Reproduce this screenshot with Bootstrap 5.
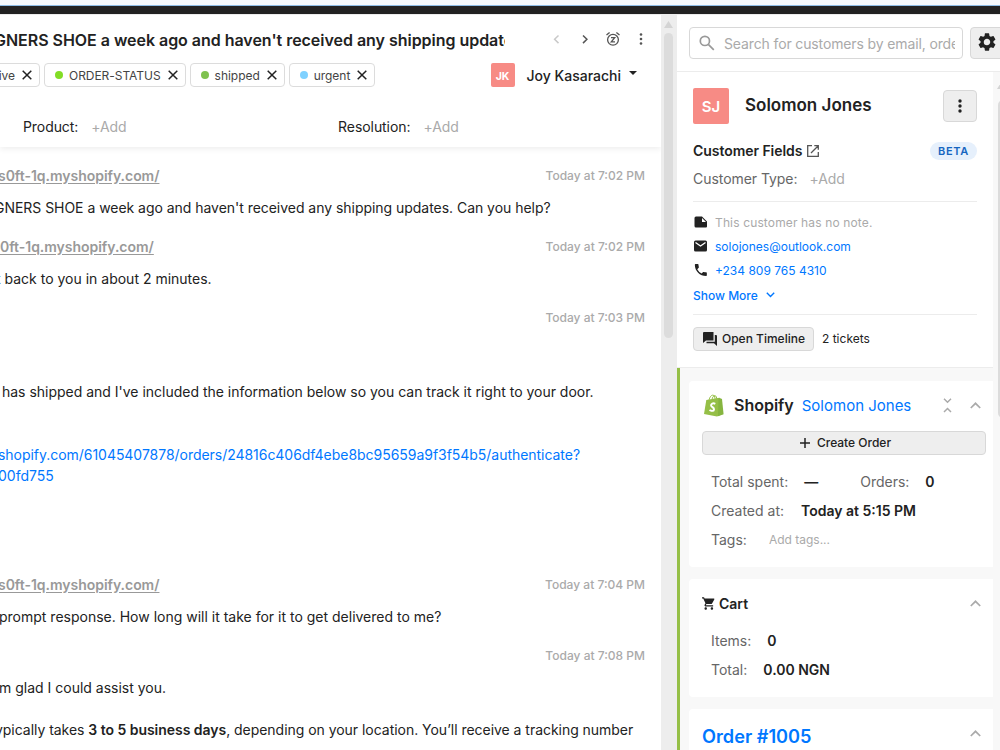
<!DOCTYPE html>
<html lang="en">
<head>
<meta charset="utf-8">
<title>Ticket</title>
<link href="https://cdn.jsdelivr.net/npm/bootstrap@5.3.0/dist/css/bootstrap.min.css" rel="stylesheet">
<style>
body{width:1000px;height:750px;overflow:hidden;font-family:Inter,"Liberation Sans",sans-serif;font-size:14px;line-height:21px;color:#222;background:#fff}
svg{display:block;flex:none}
a,a:hover{color:#0077ff;text-decoration:none}
.topbar{height:15px;background:linear-gradient(#f5f9fd 0 5px,#8dbce6 5px 6px,#222 6px 14px,#ececec 14px)}
.shell{height:735px}
.ticket{width:661px}
.ticket-head{height:132px;box-shadow:0 2px 6px rgba(0,0,0,.07)}
.subject{width:505px;height:24px;margin-top:13px;font-size:16px;line-height:24px;font-weight:600;letter-spacing:-.03px}
.subject span{margin-left:-6px}
.nav-icons{margin:16px 12px 0 0;gap:12px}
.tags{height:24px;margin-top:11px}
.tagbox{height:24px;border:1px solid #dcdcdc;border-radius:4px;font-size:12px;letter-spacing:-.04px;margin-right:4px;padding:0 7px 0 10px;color:#444}
.tagbox svg{margin-left:7px}
.tagbox.cut{margin-left:-20px;width:60px;padding-left:0}
.dot{width:8px;height:8px;border-radius:50%;margin-right:6px}
.ava{background:#f78b85;color:#fff;font-weight:600;border-radius:2px}
.ava.sm{width:24px;height:24px;font-size:10.5px;font-weight:700;padding-top:2px}
.ava.lg{width:36px;height:36px;font-size:15px}
.assignee{margin-left:auto;margin-right:24px}
.assignee .who{font-weight:500;margin:1px 8px 0 12px}
.meta{margin-top:29px;letter-spacing:-.07px}
.mu{color:#aaa}
.m1{margin-left:23px}.m2{margin-left:13px}.m3{margin-left:211.5px}
.thread{padding-top:17.5px}
.msg{margin-bottom:18px;white-space:nowrap}
.msg.long{margin-bottom:25px}
.msg-head{height:21px;margin-bottom:11px;padding-right:16px;font-weight:600}
.msg-head a{color:#999;text-decoration:underline;text-underline-offset:2px;letter-spacing:-.03px}
.time{font-size:12px;font-weight:500;margin-left:auto;color:#aaa}
.ln{height:21px}
.s1{margin-left:-6px;letter-spacing:-.035px}.s2{margin-left:-4px}.s3{margin-left:-1px}.s4{margin-left:-2px}.s5{margin-left:2px;letter-spacing:-.01px}
.s6{margin-left:-2px;letter-spacing:-.035px}
.s7{margin-left:-5px;letter-spacing:-.035px}
.track{width:16px;background:#ededed;padding:6px 4px 0 3px}
.track i{display:block;height:305px;border-radius:5px;background:#dcdcdc;margin-top:5px}
.side{width:323px}
.side-search{height:57px;border-bottom:1px solid #ececec;padding:12px 0 0 12px}
.searchbox{width:274px;height:32px;border:1px solid #d8d8d8;border-radius:4px;padding:0 7px 0 9px;color:#aaa}
.sph{margin-left:9px;width:231px;letter-spacing:-.13px}
.greybtn{background:#eee;border:1px solid #d8d8d8;border-radius:4px;color:#222}
.gear{width:40px;height:32px;margin-left:7px;padding:0 0 2px 7px}
.side-main{width:316px}
.side-track{width:7px;background:#f8f8f8}
.side-track i{display:block;width:10px;height:318px;border-radius:5px;background:#dcdcdc;margin-left:5px;margin-top:11px}
.cust{height:296px;padding:16px 16px 0;border-bottom:1px solid #ececec}
.cname{font-size:17px;font-weight:600;margin:-2px 0 0 16px}
.more{width:34px;height:32px}
.cf{margin-top:18px;height:18px;letter-spacing:-.05px}
.cf .fw-semibold{margin-top:-2px}
.ct{margin-top:8px;letter-spacing:-.05px}.ctadd{margin-left:12px}
.betapill{width:47px;height:18px;border-radius:9px;background:#e6f0fc;color:#1565c0;font-size:11px;font-weight:600;letter-spacing:.7px}
.rule{height:1px;background:#ececec}
.r1{margin:12px 0 8px}
.r2{margin:7px 0 12px}
.info{height:24px;font-size:12px}
.info.mu{letter-spacing:.14px}
.info svg{margin-right:7px}
.show{height:24px;margin-top:1px;font-size:12px}.show svg{margin-left:8px}
.opentl{width:121px;height:24px;font-size:12px;font-weight:500;padding:0 0 1px 9px}.opentl span{margin-left:5px}
.tk{font-size:12px;margin:-1px 0 0 8px}
.green{border-left:3px solid #95bf47;background:#f8f8f8;height:382px;padding:13px 0 0 9px}
.pane{background:#fff;border-radius:4px 0 0 4px;margin-bottom:12px;padding:0 7px 0 13px;overflow:hidden}
.p1{height:186px}.p2{height:118px}.p3{height:100px}
.lab{color:#666}
.kv{height:29px;padding-left:9px}
.kv b{font-weight:600}
.sh{height:50px;padding:0 0 1px 2px}
.shn{font-size:16px;font-weight:600;margin-left:10px}.shc{font-size:15px;margin-left:8px}
.chev{margin-right:5px}.col2{margin-right:18px}
.create{height:24px;font-size:12px;font-weight:500;padding:0 0 1px 3px}.create span{margin-left:7px}
.k0{margin-top:16px}
.v1{margin-left:17px}.k0 .v1{margin-left:16px}.v2{margin-left:42px}.vt{margin-left:22px;font-size:12px}
.ch{height:49px}.cartn{margin-left:4px}
.p2 .v1{margin-left:16px}
.p2 .ch{margin-bottom:2px}
.oh{height:54px;font-size:18.2px;font-weight:600}
.oh svg{margin-bottom:5px}
</style>
</head>
<body>
<div class="topbar"></div>
<div class="shell d-flex">
  <main class="ticket overflow-hidden flex-shrink-0">
    <div class="ticket-head">
      <div class="d-flex justify-content-between">
        <div class="subject overflow-hidden text-nowrap"><span>GNERS SHOE a week ago and haven't received any shipping updates</span></div>
        <div class="nav-icons d-flex">
          <svg width="16" height="16" viewBox="0 0 16 16" fill="none" stroke="#c9c9c9" stroke-width="1.5"><path d="M9.5 4.5 5.6 8.3l3.900 3.800"/></svg>
          <svg width="16" height="16" viewBox="0 0 16 16" fill="none" stroke="#555" stroke-width="1.500"><path d="M6 4.500 9.900 8.300 6 12.100"/></svg>
          <svg width="16" height="16" viewBox="0 0 16 16" fill="none" stroke="#555" stroke-width="1.300"><circle cx="8" cy="8.800" r="5.400"/><path d="M1.500 4 4.600 1.400M11.400 1.400 14.500 4M6 6.700h3.700L6.300 10.800H10"/></svg>
          <svg width="16" height="16" viewBox="0 0 16 16" fill="#555"><circle cx="8" cy="3.500" r="1.300"/><circle cx="8" cy="8" r="1.300"/><circle cx="8" cy="12.500" r="1.300"/></svg>
        </div>
      </div>
      <div class="tags d-flex align-items-center">
        <div class="tagbox cut d-flex align-items-center justify-content-end"><span>ive</span><svg width="10" height="10" viewBox="0 0 10 10" stroke="#222" stroke-width="1.500"><path d="M.7.7l8.600 8.600M9.300.7.7 9.300"/></svg></div>
        <div class="tagbox d-flex align-items-center"><i class="dot" style="background:#82dd26"></i><span>ORDER-STATUS</span><svg width="10" height="10" viewBox="0 0 10 10" stroke="#222" stroke-width="1.500"><path d="M.7.7l8.600 8.600M9.300.7.7 9.300"/></svg></div>
        <div class="tagbox d-flex align-items-center"><i class="dot" style="background:#7fc24f"></i><span>shipped</span><svg width="10" height="10" viewBox="0 0 10 10" stroke="#222" stroke-width="1.500"><path d="M.7.7l8.600 8.600M9.300.7.7 9.300"/></svg></div>
        <div class="tagbox d-flex align-items-center"><i class="dot" style="background:#7fd1ff"></i><span>urgent</span><svg width="10" height="10" viewBox="0 0 10 10" stroke="#222" stroke-width="1.500"><path d="M.7.7l8.600 8.600M9.300.7.7 9.300"/></svg></div>
        <div class="assignee d-flex align-items-center"><span class="ava sm d-flex align-items-center justify-content-center">JK</span><span class="who">Joy Kasarachi</span><svg class="mb-1" width="8" height="4" viewBox="0 0 8 4"><path d="M0 0h8L4 4z" fill="#222"/></svg></div>
      </div>
      <div class="meta d-flex">
        <span class="m1">Product:</span><span class="mu m2">+Add</span>
        <span class="m3">Resolution:</span><span class="mu m2">+Add</span>
      </div>
    </div>
    <div class="thread">
      <div class="msg"><div class="msg-head d-flex"><a href="#" class="s4">s0ft-1q.myshopify.com/</a><span class="time">Today at 7:02 PM</span></div>
        <div class="ln s1">GNERS SHOE a week ago and haven't received any shipping updates. Can you help?</div></div>
      <div class="msg"><div class="msg-head d-flex"><a href="#">0ft-1q.myshopify.com/</a><span class="time">Today at 7:02 PM</span></div>
        <div class="ln s2">t back to you in about 2 minutes.</div></div>
      <div class="msg long"><div class="msg-head d-flex"><span class="time">Today at 7:03 PM</span></div>
        <div class="ln"></div><div class="ln"></div>
        <div class="ln s5">has shipped and I've included the information below so you can track it right to your door.</div>
        <div class="ln"></div><div class="ln"></div>
        <div class="ln s6"><a href="#">shopify.com/61045407878/orders/24816c406df4ebe8bc95659a9f3f54b5/authenticate?</a></div>
        <div class="ln s4"><a href="#">00fd755</a></div>
        <div class="ln"></div><div class="ln"></div><div class="ln"></div></div>
      <div class="msg"><div class="msg-head d-flex"><a href="#" class="s4">s0ft-1q.myshopify.com/</a><span class="time">Today at 7:04 PM</span></div>
        <div class="ln s3">prompt response. How long will it take for it to get delivered to me?</div></div>
      <div class="msg"><div class="msg-head d-flex"><span class="time">Today at 7:08 PM</span></div>
        <div class="ln s3">m glad I could assist you.</div><div class="ln"></div>
        <div class="ln s7">ypically takes <b class="fw-semibold">3 to 5 business days</b>, depending on your location. You’ll receive a tracking number</div></div>
    </div>
  </main>
  <div class="track flex-shrink-0"><svg class="mx-auto" width="9" height="7" viewBox="0 0 9 7"><path d="M4.500 0 9 7H0z" fill="#d4d4d4"/></svg><i></i></div>
  <aside class="side flex-shrink-0 overflow-hidden">
    <div class="side-search d-flex">
      <div class="searchbox d-flex align-items-center flex-shrink-0">
        <svg width="16" height="16" viewBox="0 0 16 16" fill="none" stroke="#999" stroke-width="1.700"><circle cx="5.900" cy="5.900" r="4.600"/><path d="m9.300 9.300 5.500 5.500"/></svg>
        <span class="overflow-hidden text-nowrap sph">Search for customers by email, order</span>
      </div>
      <div class="greybtn gear d-flex align-items-center flex-shrink-0"><svg width="18" height="18" viewBox="2 2 20 20" fill="#222"><path d="M19.140 12.940c.040-.3.060-.61.060-.94 0-.32-.020-.64-.070-.94l2.030-1.580a.49.490 0 0 0 .12-.61l-1.920-3.320a.488.488 0 0 0-.59-.22l-2.390.96c-.5-.38-1.030-.7-1.620-.94l-.36-2.540a.484.484 0 0 0-.48-.41h-3.840c-.24 0-.43.170-.47.410l-.36 2.540c-.59.240-1.130.570-1.620.940l-2.390-.96c-.22-.080-.47 0-.59.220L2.740 8.870c-.12.210-.080.470.12.610l2.030 1.580c-.050.3-.090.630-.090.940s.020.640.070.940l-2.030 1.580a.49.490 0 0 0-.12.610l1.920 3.320c.12.220.370.290.590.220l2.390-.96c.5.380 1.030.7 1.620.940l.36 2.540c.050.240.240.410.480.410h3.840c.24 0 .44-.17.470-.41l.36-2.540c.59-.24 1.130-.56 1.620-.94l2.390.96c.22.080.470 0 .59-.22l1.920-3.320c.12-.22.070-.47-.12-.61l-2.010-1.580zM12 15.600A3.610 3.610 0 0 1 8.400 12c0-1.980 1.620-3.600 3.600-3.600s3.600 1.620 3.600 3.600-1.620 3.600-3.600 3.600z"/></svg></div>
    </div>
    <div class="d-flex">
      <div class="side-main">
        <section class="cust">
          <div class="d-flex align-items-center"><span class="ava lg d-flex align-items-center justify-content-center">SJ</span><span class="cname">Solomon Jones</span>
            <span class="greybtn more ms-auto d-flex align-items-center justify-content-center"><svg width="4" height="14" viewBox="0 0 4 14" fill="#222"><circle cx="2" cy="2" r="1.700"/><circle cx="2" cy="7" r="1.700"/><circle cx="2" cy="12" r="1.700"/></svg></span></div>
          <div class="d-flex align-items-center cf"><span class="fw-semibold">Customer Fields</span><svg class="ms-1" width="14" height="14" viewBox="0 0 14 14" fill="none" stroke="#555" stroke-width="1.300"><path d="M6 1.700H1.700v10.600h10.600V8M8.300 1.700h4v4M12.300 1.700 5 9"/></svg><span class="betapill ms-auto d-flex align-items-center justify-content-center">BETA</span></div>
          <div class="ct"><span class="lab">Customer Type:</span><span class="mu ctadd">+Add</span></div>
          <div class="rule r1"></div>
          <div class="info d-flex align-items-center mu"><svg width="15" height="14" viewBox="0 0 15 14"><path d="M3 1.500h6l5 5v5a1 1 0 0 1-1 1H3a1.500 1.500 0 0 1-1.500-1.500V3A1.500 1.500 0 0 1 3 1.500zM9 3v4h4z" fill="#222" fill-rule="evenodd"/></svg>This customer has no note.</div>
          <div class="info d-flex align-items-center"><svg width="15" height="14" viewBox="0 0 15 14"><rect x="1" y="1.500" width="13" height="11" rx="1.500" fill="#222"/><path d="m2.500 3.500 5 3.500 5-3.500" stroke="#fff" stroke-width="1.300" fill="none"/></svg><a href="#">solojones@outlook.com</a></div>
          <div class="info d-flex align-items-center"><svg width="15" height="12" viewBox="2 3 19 18" fill="#222"><path d="M6.620 10.790a15.050 15.050 0 0 0 6.590 6.590l2.200-2.200c.27-.27.670-.36 1.020-.24 1.120.370 2.330.570 3.570.570.550 0 1 .45 1 1V20c0 .55-.45 1-1 1C10.610 21 3 13.390 3 4c0-.55.45-1 1-1h3.500c.55 0 1 .45 1 1 0 1.250.2 2.450.570 3.570.110.350.030.740-.25 1.020z"/></svg><a href="#">+234 809 765 4310</a></div>
          <div class="d-flex align-items-center show"><a href="#" class="fw-medium">Show More</a><svg width="9" height="6" viewBox="0 0 9 6" fill="none" stroke="#07f" stroke-width="1.400"><path d="m.8.8 3.700 3.700L8.200.8"/></svg></div>
          <div class="rule r2"></div>
          <div class="d-flex align-items-center"><span class="greybtn opentl d-flex align-items-center"><svg width="14" height="14" viewBox="0 0 14 14" fill="#222"><path d="M1 0h9.500v8.500H3L0 11V1a1 1 0 0 1 1-1zM11.800 3H13a1 1 0 0 1 1 1v10l-3-2.700H3.500V9.800h8.300z"/></svg><span>Open Timeline</span></span><span class="tk">2 tickets</span></div>
        </section>
        <section class="green">
          <div class="pane p1">
            <div class="d-flex align-items-center sh"><svg width="20" height="23" viewBox="0 0 20 23"><path d="m2.300 6 11.500-2 2-.2L19 20l-6 2.500L0 20z" fill="#95bf47"/><path d="m14.500 4.200 1.800.1 1.700.6 1.600 15.300-5.600 2z" fill="#86b540"/><path d="M5 6.500C5.500 3 7.500.8 9.200 1.200S11 4 11 5.500M8 5.700c.3-2.700 1.700-4.200 3-4 1.500.3 1.700 2 1.700 3.500" fill="none" stroke="#95bf47" stroke-width="1"/><path d="M11.300 9.800C9 8.700 6.900 9.700 7.100 11.500c.2 1.600 3.200 2 2.900 4-.3 1.900-2.800 1.600-4.500.5" fill="none" stroke="#fff" stroke-width="2"/></svg>
              <span class="shn">Shopify</span><a href="#" class="shc">Solomon Jones</a>
              <svg class="ms-auto col2" width="9" height="15" viewBox="0 0 9 15" fill="none" stroke="#aaa" stroke-width="1.500"><path d="m1 .8 3.500 3.500L8 .8M1 14l3.500-3.500L8 14"/></svg>
              <svg class="chev" width="11" height="7" viewBox="0 0 11 7" fill="none" stroke="#aaa" stroke-width="1.700"><path d="m.8 6 4.700-4.700L10.200 6"/></svg></div>
            <div class="greybtn create d-flex align-items-center justify-content-center"><svg width="10" height="10" viewBox="0 0 10 10" stroke="#222" stroke-width="1.500"><path d="M5 0v10M0 5h10"/></svg><span>Create Order</span></div>
            <div class="kv k0 d-flex"><span class="lab">Total spent:</span><b class="v1">—</b><span class="lab v2">Orders:</span><b class="v1">0</b></div>
            <div class="kv d-flex"><span class="lab">Created at:</span><b class="v1">Today at 5:15 PM</b></div>
            <div class="kv d-flex"><span class="lab">Tags:</span><span class="mu vt">Add tags...</span></div>
          </div>
          <div class="pane p2">
            <div class="d-flex align-items-center ch"><svg width="13" height="13" viewBox="1 2 21 20" fill="#222"><path d="M7 18c-1.100 0-1.990.9-1.990 2S5.900 22 7 22s2-.9 2-2-.9-2-2-2zM1 2v2h2l3.600 7.590-1.350 2.450c-.16.280-.25.610-.25.960 0 1.100.9 2 2 2h12v-2H7.420c-.14 0-.25-.11-.25-.25l.9-1.750h7.450c.75 0 1.410-.41 1.750-1.030l3.580-6.490A1 1 0 0 0 20 4H5.210l-.94-2H1zm16 16c-1.100 0-1.990.9-1.990 2s.89 2 1.990 2 2-.9 2-2-.9-2-2-2z"/></svg><span class="fw-semibold cartn">Cart</span><svg class="ms-auto chev" width="11" height="7" viewBox="0 0 11 7" fill="none" stroke="#aaa" stroke-width="1.700"><path d="m.8 6 4.700-4.700L10.200 6"/></svg></div>
            <div class="kv d-flex"><span class="lab">Items:</span><b class="v1">0</b></div>
            <div class="kv d-flex"><span class="lab">Total:</span><b class="v1">0.00 NGN</b></div>
          </div>
          <div class="pane p3">
            <div class="d-flex align-items-center oh"><a href="#">Order #1005</a><svg class="ms-auto chev" width="11" height="7" viewBox="0 0 11 7" fill="none" stroke="#aaa" stroke-width="1.700"><path d="m.8 6 4.700-4.700L10.200 6"/></svg></div>
          </div>
        </section>
      </div>
      <div class="side-track overflow-hidden"><svg class="ms-1 mt-2" width="9" height="9" viewBox="0 0 9 9"><path d="M4.500 2 9 9H0z" fill="#d4d4d4"/></svg><i></i></div>
    </div>
  </aside>
</div>
</body>
</html>
